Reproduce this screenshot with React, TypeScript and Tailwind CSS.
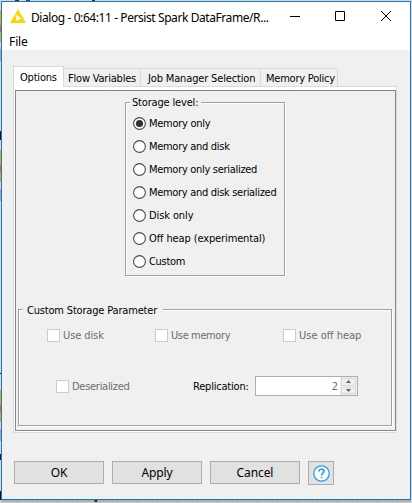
import type { ReactNode } from "react";

const tahoma = "font-['DejaVu_Sans_Condensed','DejaVu_Sans',sans-serif] [font-stretch:condensed]";

function Radio({ label, checked, spacing }: { label: string; checked?: boolean; spacing: string }) {
  return (
    <label className="flex h-[23px] items-center gap-[3px]">
      <svg width="13" height="13" viewBox="0 0 13 13" className="shrink-0">
        <circle cx="6.5" cy="6.5" r="5.9" fill="#fff" stroke="#4a4a4a" strokeWidth="1.1" />
        {checked && <circle cx="6.5" cy="6.5" r="3.6" fill="#303030" />}
      </svg>
      <span className={`whitespace-nowrap ${spacing}`}>{label}</span>
    </label>
  );
}

function Check({ label, spacing }: { label: string; spacing: string }) {
  return (
    <label className="flex h-[13px] items-center gap-[3px] text-[#6d6d6d]">
      <span className="size-[13px] shrink-0 border border-[#cccccc] bg-white" />
      <span className={`whitespace-nowrap ${spacing}`}>{label}</span>
    </label>
  );
}

function Tab({ children, className }: { children: ReactNode; className: string }) {
  return (
    <div className={`flex h-[18px] items-center whitespace-nowrap border border-b-0 border-[#d9d9d9] pt-px ${className}`}>
      {children}
    </div>
  );
}

function Button({ children }: { children: ReactNode }) {
  return (
    <button className="flex h-[23px] w-[90px] items-center justify-center border border-[#adadad] bg-[#e1e1e1] font-['Noto_Sans',sans-serif] text-[12px] tracking-[-0.1px]">
      {children}
    </button>
  );
}

/* Sliver of the workflow canvas that shows beside the dialog. */
function CanvasEdge() {
  return (
    <div className="w-px shrink-0">
      <div className="mt-[10px] h-[15px] bg-[#d9b300]" />
      <div className="h-[7px] bg-[#d07030]" />
      <div className="h-[10px] bg-[#d9b300]" />
      <div className="mt-[7px] h-[12px] bg-[#a3a6a9]" />
      <div className="mt-[70px] h-[9px] bg-[#200810]" />
      <div className="mt-[10px] h-[15px] bg-[#d9b300]" />
      <div className="h-[7px] bg-[#d07030]" />
      <div className="h-[10px] bg-[#d9b300]" />
      <div className="mt-[7px] h-[12px] bg-[#a3a6a9]" />
      <div className="mt-[172px] h-px bg-[#101010]" />
      <div className="mt-[16px] h-[15px] bg-[#d9b300]" />
      <div className="h-[7px] bg-[#d07030]" />
      <div className="h-[10px] bg-[#d9b300]" />
      <div className="mt-[7px] h-[12px] bg-[#a3a6a9]" />
      <div className="mt-[13px] h-[6px] bg-[#101840]" />
      <div className="mt-[31px] h-[9px] bg-[#100808]" />
    </div>
  );
}

export default function App() {
  return (
    <div className={`flex h-[503px] w-[412px] overflow-hidden bg-[#d6d8da] bg-[repeating-linear-gradient(90deg,transparent_0_17px,#c6c8ca_17px_18px,transparent_18px_20px)] text-[11px] leading-[13px] text-black ${tahoma}`}>
      <CanvasEdge />
      <div className="flex w-[410px] shrink-0 flex-col">
        <div className="flex h-px shrink-0">
          <span className="ml-[14px] w-1 bg-[#303030]" />
          <span className="ml-[7px] w-1 bg-[#404040]" />
          <span className="ml-[62px] w-[3px] bg-[#303030]" />
        </div>
        <div className="flex h-[499px] shrink-0 flex-col border border-[#1979ca] bg-[#f0f0f0]">
          <header className="h-12 bg-white">
            <div className="flex h-[28px] items-center pl-2">
              <svg width="16" height="14" viewBox="0 0 17 15" className="shrink-0">
                <path d="M8.5 0 17 15H0Z" fill="#ffd500" />
                <path d="M6 6 12.500 10.500 6.500 12.500Z" fill="#fff" />
              </svg>
              <span className="ml-[5px] mt-[2px] w-[240px] whitespace-nowrap font-['Noto_Sans',sans-serif] text-[12px] tracking-[-0.42px]">
                Dialog - 0:64:11 - Persist Spark DataFrame/R...
              </span>
              <svg width="103" height="12" viewBox="0 0 103 12" className="ml-[19px] shrink-0" fill="none" stroke="#000">
                <path d="M0 6.500H10M45.500 1.500H54.500V10.500H45.500Z" />
                <path d="M91 1 101 11M101 1 91 11" />
              </svg>
            </div>
            <div className="pl-[7px] pt-[5px] font-['Noto_Sans',sans-serif] text-[12px] tracking-[-0.1px]">File</div>
          </header>

          <nav className="ml-[11px] mt-4 flex h-5 items-end">
            <div className="z-10 flex h-[21px] w-[51px] shrink-0 items-center self-start border border-b-0 border-[#d9d9d9] bg-white pl-[6px] tracking-[-0.2px]">Options</div>
            <Tab className="w-[77px] border-l-0 pl-[4px] tracking-[-0.2px]">Flow Variables</Tab>
            <Tab className="w-[120px] border-l-0 pl-[7px] tracking-[-0.15px]">Job Manager Selection</Tab>
            <Tab className="w-[77px] border-l-0 pl-[5px] tracking-[-0.22px]">Memory Policy</Tab>
          </nav>

          <main className="ml-[11px] h-[347px] w-[384px] border border-[#dcdcdc] bg-white pb-px pl-px pt-[3px]">
            <div className="flex h-[341px] w-[381px] flex-col border border-[#828790] bg-[#f0f0f0]">
              <section className="ml-[109px] mt-[11px] h-[174px] w-[160px] border border-[#a0a0a0] shadow-[1px_1px_0_#fff,inset_1px_1px_0_#fff]">
                <h2 className="-mt-[7px] ml-[4px] h-[14px] w-[71px] whitespace-nowrap bg-[#f0f0f0] pl-[2px] tracking-[-0.17px]">Storage level:</h2>
                <div className="-mt-[2px] ml-[7px] pt-[4px]">
                  <Radio label="Memory only" checked spacing="tracking-[-0.27px]" />
                  <Radio label="Memory and disk" spacing="tracking-[-0.3px]" />
                  <Radio label="Memory only serialized" spacing="tracking-[-0.3px]" />
                  <Radio label="Memory and disk serialized" spacing="tracking-[-0.31px]" />
                  <Radio label="Disk only" spacing="tracking-[-0.1px]" />
                  <Radio label="Off heap (experimental)" spacing="tracking-[-0.12px]" />
                  <Radio label="Custom" spacing="tracking-[-0.3px]" />
                </div>
              </section>

              <section className="ml-[2px] mt-[33px] h-[117px] w-[374px] border border-[#a0a0a0] shadow-[1px_1px_0_#fff,inset_1px_1px_0_#fff]">
                <h2 className="-mt-[7px] ml-[4px] h-[14px] w-[140px] whitespace-nowrap bg-[#f0f0f0] pl-[4px] pt-px tracking-[-0.18px]">Custom Storage Parameter</h2>
                <div className="ml-7 mt-3 flex">
                  <div className="w-[108px]"><Check label="Use disk" spacing="tracking-[-0.1px]" /></div>
                  <div className="w-[128px]"><Check label="Use memory" spacing="tracking-[-0.38px]" /></div>
                  <Check label="Use off heap" spacing="tracking-[0px]" />
                </div>
                <div className="ml-[37px] mt-[34px] flex h-5 items-center">
                  <div className="w-[137px] pt-px"><Check label="Deserialized" spacing="tracking-[-0.28px]" /></div>
                  <span className="w-[62px] whitespace-nowrap tracking-[-0.2px]">Replication:</span>
                  <div className="flex h-5 w-[103px] items-center justify-end border border-[#abadb3] bg-white text-[#6d6d6d]">
                    <span className="mr-[2px]">2</span>
                    <div className="flex h-[18px] w-[17px] flex-col gap-px bg-[#f0f0f0] p-px">
                      <span className="flex h-[8px] items-center justify-center border border-[#d9d9d9]"><svg width="5" height="3"><path d="M0 3 2.500 0 5 3Z" fill="#606060" /></svg></span>
                      <span className="flex h-[8px] items-center justify-center border border-[#d9d9d9]"><svg width="5" height="3"><path d="M0 0 2.500 3 5 0Z" fill="#606060" /></svg></span>
                    </div>
                  </div>
                </div>
              </section>
            </div>
          </main>

          <footer className="ml-3 mt-7 flex gap-2">
            <Button>OK</Button>
            <Button>Apply</Button>
            <Button>Cancel</Button>
            <button className="flex h-6 w-[26px] items-center justify-center border border-[#adadad] bg-[#e1e1e1]">
              <svg width="17" height="17" viewBox="0 0 17 17" fill="none" stroke="#2a9df4">
                <circle cx="8.500" cy="8.500" r="7.700" fill="#fff" strokeWidth="1.300" />
                <path d="M6 6.500C6 3.500 11 3.500 11 6.300 11 8.300 8.600 8.100 8.600 10.500M8.600 11.800V13.300" strokeWidth="1.700" />
              </svg>
            </button>
          </footer>
        </div>
        <div className="flex h-[3px] bg-gradient-to-b from-black/25 to-black/5">
          <span className="ml-[93px] h-[2px] w-px bg-[#c06020]" />
          <span className="h-[2px] w-[2px] bg-[#102040]" />
        </div>
      </div>
    </div>
  );
}
